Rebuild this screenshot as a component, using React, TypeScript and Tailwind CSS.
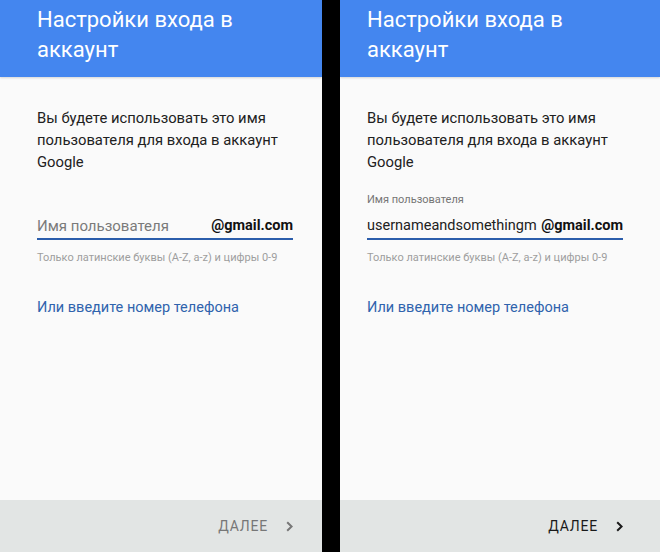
import React from 'react'

type ScreenProps = {
  value?: string
  edge: 'left' | 'right'
}

function Chevron({ color }: { color: string }) {
  return (
    <svg width="7" height="11" viewBox="0 0 7 11" fill="none" className="block">
      <polyline points="1.2,1.2 5.6,5.5 1.2,9.8" stroke={color} strokeWidth="2" strokeLinejoin="miter" />
    </svg>
  )
}

function Screen({ value, edge }: ScreenProps) {
  const filled = !!value
  const pad = edge === 'left' ? 'pl-[37px] pr-[29px]' : 'pl-[27px] pr-[37px]'

  return (
    <div className="flex flex-col h-[552px] bg-[#fafafa]">
      {/* Header */}
      <div className={`h-[77px] shrink-0 bg-[#4486ef] shadow-[0_1px_2px_rgba(0,0,0,0.15)] pt-[5px] ${pad}`}>
        <h1 className="text-[22px] leading-[30px] text-white font-normal">
          Настройки входа в
          <br />
          аккаунт
        </h1>
      </div>

      {/* Body */}
      <div className={`flex-1 min-w-0 flex flex-col ${pad}`}>
        <p className="mt-[30px] text-[14.8px] leading-[22px] text-[#212121]">
          Вы будете использовать это имя
          <br />
          пользователя для входа в аккаунт
          <br />
          Google
        </p>

        <div className={`mt-[20px] h-[14px] text-[11px] leading-[14px] text-[#757575] ${filled ? '' : 'invisible'}`}>
          Имя пользователя
        </div>

        <div className="mt-[9px] flex items-end border-b-2 border-[#2b5dab] pb-[2px]">
          <div
            className={`flex-1 min-w-0 overflow-hidden whitespace-nowrap leading-[20px] ${
              filled ? 'text-[14.5px] text-[#212121]' : 'text-[15px] text-[#7a7a7a]'
            }`}
          >
            {filled ? value : 'Имя пользователя'}
          </div>
          <div className="shrink-0 pl-[3px] text-[14.5px] leading-[20px] font-bold text-[#111]">@gmail.com</div>
        </div>

        <div className="mt-[11px] text-[11px] leading-[14px] text-[#9e9e9e]">
          Только латинские буквы (A-Z, a-z) и цифры 0-9
        </div>

        <div className="mt-[33px] text-[14.5px] leading-[20px] text-[#2f63ad]">Или введите номер телефона</div>
      </div>

      {/* Footer */}
      <div className={`h-[52px] shrink-0 bg-[#e2e5e4] flex items-center justify-end gap-[18px] ${pad}`}>
        <span
          className={`text-[14px] leading-[20px] tracking-[0.8px] ${filled ? 'text-[#1a1a1a]' : 'text-[#777]'}`}
        >
          ДАЛЕЕ
        </span>
        <Chevron color={filled ? '#1a1a1a' : '#777'} />
      </div>
    </div>
  )
}

export default function App() {
  return (
    <div className="flex w-[660px] h-[552px] overflow-hidden bg-black font-['Roboto','Noto_Sans',sans-serif]">
      <div className="w-[322px] min-w-0 shrink-0 overflow-hidden">
        <Screen edge="left" />
      </div>
      <div className="w-[18px] shrink-0 bg-black" />
      <div className="w-[320px] min-w-0 shrink-0 overflow-hidden">
        <Screen edge="right" value="usernameandsomethingm" />
      </div>
    </div>
  )
}
